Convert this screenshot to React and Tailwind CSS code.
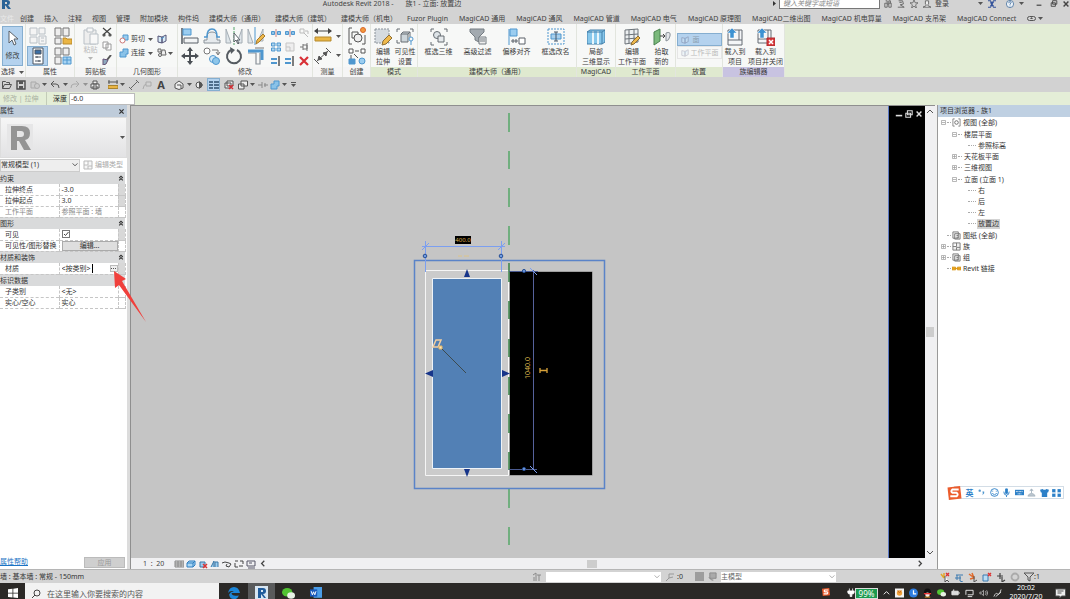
import clsx from 'clsx';

// colours shared by the drawings
const B = '#4f97cf';
const D = '#5b6168';
const L = '#b9c0c6';

// drawings on an 18 x 18 grid
const BIG = {
  cursor: <path d="M5 2v12l3-3 2 5 2-1-2-5h4z" fill="#fff" stroke={D} />,
  family: <g fill="#f4f4f4" stroke={L}><path d="M1 1h7v7H1zM1 10h7v6H1zM10 1h6v6h-6z" /><path d="M10 9h7v8h-7zM12 11h3M12 14h3" /></g>,
  types: <g fill="#eee" stroke="#777"><path d="M1 1h6v8H1zM9 1h6v8H9zM1 11h6v6H1z" /><path d="M9 11h3l1 1h5v5H9z" fill="#eab544" stroke="#b98a2c" /></g>,
  props: <g stroke="#4b5560" fill="#fff"><path d="M4 1h10v16H4z" /><path d="M6 3h6v4H6z" fill="#3a6ea5" /><path d="M6 10h6M6 14h6M8 9v2M10 13v2" /></g>,
  typeGrid: <g fill="#eee" stroke="#777"><path d="M1 1h6v7H1zM9 1h6v7H9zM1 10h6v7H1z" /><path d="M9 10h8v7H9zM13 10v7M9 13h8" fill="#a9d4f2" stroke={B} /></g>,
  paste: <g fill="#eee" stroke={L}><path d="M2 3h12v14H2z" /><path d="M5 1h6v4H5zM8 7h8v10H8z" fill="#f8f8f8" /></g>,
  align: <g fill="#f2f4f5" stroke={D}><path d="M1 1v16" strokeWidth="1.6" /><path d="M2 2h8v6H2z" fill="#9bcdf0" stroke={B} /><path d="M3 11h14v5H3z" /></g>,
  offset: <g fill="none"><path d="M1 16h16v-3h-3v-3q0-5-5-5t-5 5v3H1z" fill="#e6eaed" stroke="#8a9299" /><path d="M1 10h3q0-8 5-8t5 8h3" stroke={B} strokeWidth="1.6" /></g>,
  mirror: <g fill="#dfe6ea" stroke="#a4adb4"><path d="M1 2l5 14H1zM17 2l-5 14h5z" /><path d="M9 0v18" stroke="#57a46b" strokeDasharray="3 1" /><path d="M9 6v9l2-2 2 4 1-1-2-3h3z" fill="#fff" stroke={D} /></g>,
  mirrorDraw: <g fill="#dfe6ea" stroke="#a4adb4"><path d="M1 2l5 14H1zM16 2l-5 12h5z" /><path d="M8 0v18" stroke={B} /><path d="M9 17l1-4 6-6 2 2-6 6z" fill="#efb94c" stroke="#a57a2c" /></g>,
  move: <g fill="#4a4f55"><path d="M9 0l3 4H6zM9 18l3-4H6zM0 9l4-3v6zM18 9l-4-3v6z" /><path d="M8 4h2v4h4v2h-4v4H8v-4H4V8h4z" /></g>,
  copy: <g fill="#fff" stroke="#777"><circle cx="4" cy="4" r="3" /><path d="M9 3h6v4M13 5l2 3 2-3" fill="none" /><circle cx="10" cy="12" r="3.5" fill="#cfe8f8" stroke={B} /><circle cx="13" cy="14" r="3.5" fill="#8ec6ea" stroke={B} /></g>,
  rotate: <g fill="none" stroke="#555b61" strokeWidth="2"><path d="M6 3A7 7 0 1 0 12 3" /><path d="M5 0l5 3-4 4z" fill="#555b61" stroke="none" /></g>,
  trim: <g fill="none"><path d="M1 6h8v11h4V6" stroke="#8a9299" strokeWidth="1.2" /><path d="M1 4h14v9" stroke={B} strokeWidth="3" /><path d="M8 1h9" stroke="#777" /></g>,
  measure: <g><path d="M1 4h16" stroke="#444" /><path d="M0 4l4-3v6zM18 4l-4-3v6z" fill="#444" /><path d="M1 10h16v4H1z" fill="#eab544" stroke="#b58a2e" /></g>,
  dimension: <g stroke="#555" fill="#555"><path d="M3 14L14 4M0 12l5 5M12 1l5 5" /><path d="M4 13l1-4 3 3zM13 5l-4 1 3 3z" /></g>,
  group: <g fill="none" stroke="#555"><path d="M4 1H1v16h3M14 17h3V8" /><path d="M4 5h6v6H4z" /><circle cx="10" cy="11" r="4" fill="#eee" /><circle cx="15" cy="3" r="2.5" fill="#f39a3d" stroke="#d9662a" /></g>,
  assembly: <g fill="#fff" stroke="#555"><path d="M1 2h4v4H1zM13 2h4v4h-4zM7 4h4M3 8v4M6 7l4 4" /><path d="M1 12h6v5H1z" fill={B} stroke={B} /><circle cx="14" cy="14" r="3" fill="#9bcdf0" stroke={B} /></g>,
  editSketch: <g><path d="M1 1h14v14H1z" fill="#d5dbe0" stroke="#8a9299" strokeDasharray="2 1" /><path d="M8 17l1-4 6-6 3 3-6 6z" fill="#efb94c" stroke="#8d6e35" /></g>,
  visibility: <g fill="none" stroke="#666d73"><path d="M4 1H1v3M14 1h3v3M4 15H1v-3" /><path d="M5 6h7v8H5zM5 6l2-2h7l-2 2M14 4v5" fill="#cdd5da" /><circle cx="15" cy="11" r="2" stroke={B} /><path d="M15 13v4" stroke={B} /></g>,
  box3d: <g fill="none" stroke="#666d73"><path d="M4 1H1v3M14 1h3v3M4 17H1v-3M14 17h3v-3" /><circle cx="7" cy="7" r="3.5" fill="#dde3e7" /><path d="M8 8h6v6H8z" fill="#e6eaed" /></g>,
  filter: <g stroke="#757c82"><path d="M1 1h14v3l-5 5v5l-4-2V9L1 4z" fill="#a3aab0" /><path d="M10 9h7v7h-7zM11 11h5M11 13h5" fill="#eee" /></g>,
  shiftAlign: <g fill="#fff" stroke={D}><path d="M1 1v16" stroke={B} /><path d="M2 1h7v7H2z" fill="#9bcdf0" stroke={B} /><path d="M11 10h6v6h-6zM3 13h7M5 11v4M8 11v4" /></g>,
  rename: <g fill="none" stroke={B}><path d="M1 1h16v15H1z" strokeDasharray="2 1" /><path d="M4 6h10v5H4z" fill="#a8cfec" /><path d="M9 4v9M7 4h4M7 13h4" stroke="#456" /></g>,
  section: <g stroke="#427fa9"><path d="M0 4l3-2h15v12l-3 2H0z" fill="#87c7eb" /><path d="M6 3v13M11 3v13" stroke="#e9f6fc" strokeWidth="2" /><path d="M0 4h15v12M15 4l3-2" fill="none" /></g>,
  plane: <g fill="none" stroke="#6c7379"><path d="M2 2l13-1v13L2 16zM6 2v13M11 1v13M2 7l13-1M2 11l13-1" fill="#eceff1" /><path d="M8 17l1-3 6-6 2 2-6 6z" fill="#efb94c" stroke="#8d6e35" /></g>,
  pick: <g><path d="M1 4l6-3v12l-6 4z" fill="#7bb97c" stroke="#4b8350" /><path d="M7 8h5M10 6l2 2-2 2" stroke="#444" fill="none" /><path d="M13 5q5-2 4 3t-4 5z" fill="#e4e7ea" stroke="#8a9299" /></g>,
  load: <g fill="#f4f6f8" stroke="#646b72"><path d="M2 2h14v15H2zM2 12h14M13 2v10" /><path d="M6 0L1 5h3v5h4V5h3z" fill="#3d92d2" stroke="#fff" strokeWidth=".5" /></g>,
  loadClose: <g fill="#f4f6f8" stroke="#646b72"><path d="M1 2h13v13H1zM1 11h13M11 2v9" /><path d="M5 0L0 5h3v5h4V5h3z" fill="#3d92d2" stroke="#fff" strokeWidth=".5" /><path d="M10 10h8v8h-8z" fill="#d6383b" stroke="#b02b2e" /><path d="M12 12l4 4M16 12l-4 4" stroke="#fff" strokeWidth="1.5" /></g>,
};

// drawings on a 10 x 10 grid
const SMALL = {
  open: <path d="M.5 8.5v-7h3l1 1h3v2M.5 8.5l2-4h7l-2 4z" fill="none" stroke="#555" />,
  save: <g><path d="M1 1h8v8H1z" fill="#d5d5d5" stroke="#4c4c4c" strokeWidth="1.4" /><path d="M3 1h4v3H3zM3 6h4v3H3z" fill="#555" /></g>,
  sync: <g fill="#ccc" stroke="#aaa"><path d="M1 2h5v6H1z" /><circle cx="7" cy="6" r="2.5" /></g>,
  undo: <path d="M4 1L1 4l3 3M1 4h5q3 0 3 4" fill="none" stroke="#555" />,
  redo: <path d="M6 1l3 3-3 3M9 4H4Q1 4 1 8" fill="none" stroke="#aaa" />,
  print: <g fill="#eee" stroke="#555"><path d="M3 1h4v3H3zM1 4h8v4H1zM3 6h4v3H3z" /></g>,
  ruler: <g><path d="M0 2h10M1 0v4M9 0v4" stroke="#555" /><path d="M0 5.5h10v3H0z" fill="#eab544" stroke="#a9842f" /></g>,
  line: <path d="M1 9l7-7M0 7l3 3M7 0l3 3" stroke="#666" />,
  tag: <path d="M1 9q1-5 3-5M4 2h5v4H4z" fill="none" stroke="#aaa" />,
  home: <g fill="#eee" stroke="#555"><path d="M1 4l4-3 4 3v4L5 9.5 1 8z" /><path d="M3 5h4v4" /></g>,
  sect: <g><circle cx="5" cy="5" r="3" fill="#eee" stroke="#555" /><path d="M5 1l4 4-4 4z" fill="#555" /></g>,
  thin: <path d="M0 2h4M5 2h5M0 5h4M5 5h5M0 8h4M5 8h5" stroke="#2d4d6d" strokeWidth="1.5" />,
  closeWin: <g fill="#eee" stroke="#555"><path d="M3 1h6v5H3zM1 3h6v5H1z" /><path d="M5 5l4 4M9 5L5 9" stroke="#d62f34" strokeWidth="1.5" /></g>,
  windows: <path d="M3 1h6.500v5H3zM.5 4H6v5H.5z" fill="#eee" stroke="#555" />,
  snap: <path d="M0 5h4M6 5h4M4 2v6M7 3v4" stroke="#888" />,
  join: <path d="M4 1h5v5H7v3H1V4h3z" fill="#8ac2e8" stroke={B} />,
  cut: <g><path d="M4 1h5v5H4z" fill="#9bcdf0" stroke={B} /><circle cx="3.5" cy="6.5" r="2.5" fill="#fff" stroke="#c77" /></g>,
  cube: <g fill="#d9ebf7" stroke="#557"><path d="M1 2l4 1v6L1 8zM5 3l4-2v6L5 9z" /><path d="M4 5l3-2" stroke={B} /></g>,
  paint: <g fill="#eee" stroke="#666"><path d="M1 1h3v3H1zM5 2h3l1 5H4z" /><circle cx="3" cy="7" r="1.5" /></g>,
  scissors: <g fill="none" stroke="#444" strokeWidth="1.2"><path d="M1 1l7 6M9 1L2 7" /><circle cx="2" cy="8" r="1" /><circle cx="8" cy="8" r="1" /></g>,
  copyDoc: <path d="M1 1h5v6H1zM4 3h5v6H4z" fill="#fff" stroke="#999" />,
  brush: <g><path d="M9 0L5 5" stroke="#555" strokeWidth="2" /><path d="M1 4l5 1-2 4-3 1z" fill="#8ea9bf" stroke="#657" /></g>,
  split: <g><path d="M.5 3.500h3v3h-3zM6.500 3.500h3v3h-3z" fill="#8dc4e8" stroke={B} /><path d="M5 1v8" stroke="#b66" strokeWidth=".8" /></g>,
  array: <path d="M.5 1h3.500v3H.5zM6 1h3.500v3H6zM.5 6h3.500v3H.5zM6 6h3.500v3H6z" fill="#add5ef" stroke={B} />,
  unpin: <path d="M1 1h4v4H1zM5 5l4 4M6 3h3v3" fill="none" stroke="#bbb" />,
  pin: <path d="M1 5h3M4 2v6M4 3h4v4H4M8 1v8" fill="none" stroke="#777" />,
  scale: <path d="M1 1h8v8H1zM1 5h4v4" fill="#eee" stroke="#c5c5c5" />,
  extend: <g><path d="M0 3h6M0 7h6" stroke={B} strokeWidth="2" /><path d="M8 0v10" stroke="#555" strokeWidth="1.5" /></g>,
  del: <path d="M1 1l8 8M9 1L1 9" stroke="#d82f35" strokeWidth="2.2" />,
  x: <path d="M2 2l6 6M8 2L2 8" stroke="currentColor" strokeWidth="1.8" />,
  down: <path d="M2 3l3 3 3-3" fill="none" stroke="currentColor" />,
  up: <path d="M2 7l3-3 3 3" fill="none" stroke="currentColor" />,
  collapse: <path d="M2 5l3-3 3 3M2 9l3-3 3 3" fill="none" stroke="currentColor" strokeWidth="1.8" />,
  right: <path d="M3 2l3 3-3 3" fill="none" stroke="currentColor" strokeWidth="1.4" />,
  left: <path d="M7 2L4 5l3 3" fill="none" stroke="currentColor" strokeWidth="1.4" />,
  min: <path d="M1 7h8" stroke="currentColor" strokeWidth="2" />,
  restore: <path d="M3 1h6v5H3zM1 4h6v5H1z" fill="none" stroke="currentColor" strokeWidth="1.3" />,
  search: <g fill="none" stroke="currentColor"><circle cx="6" cy="4" r="3" /><path d="M4 6L1 9" /></g>,
  binoc: <path d="M1 4h3v5H1zM6 4h3v5H6zM2 1h2v3M6 4V1h2v3M4 5h2" fill="none" stroke="#555" />,
  key: <path d="M2 1h5l1 4-4 1 5 3H1M3 3h3" fill="none" stroke="#555" />,
  star: <path d="M5 0l1.5 3.5H10L7 6l1 4-3-2.3L2 10l1-4L0 3.5h3.500z" fill="none" stroke="#555" strokeWidth=".9" />,
  user: <path d="M3 1h4v4L6 6v1l4 2H0l4-2V6L3 5z" fill="#eee" stroke="#555" />,
  exch: <path d="M0 1h3l2 3 2-3h3M0 9h3l2-3 2 3h3M3 3l4 5M7 2L3 8" fill="none" stroke="#34539a" strokeWidth="1.4" />,
  help: <g fill="none" stroke="#446f9c"><circle cx="5" cy="5" r="4.5" fill="#eef4fa" /><path d="M3.500 4q0-2 1.500-2t1.500 1.500L5 5v1M5 7v1" /></g>,
  detail: <path d="M1 2h9v6H1zM1 4h9M1 6h9M4 2v6M7 2v6" fill="#ddd" stroke="#888" />,
  style: <path d="M1 4l2-2h6v4L7 8H1zM1 4h6v4M7 4l2-2" fill="#a9d6f4" stroke="#2f7fc0" />,
  sun: <g><path d="M2 3h5v5H2z" fill="#9bcdf0" stroke="#3a77a5" /><path d="M5 5l4 4M9 5L5 9" stroke="#d33" strokeWidth="1.5" /></g>,
  shadow: <path d="M1 8l3-6v6M5 8V3h3v5" fill="#9bcdf0" stroke="#3a77a5" />,
  glasses: <path d="M0 4l3-1 4 1 2 1-2 3-3-1 1-2" fill="none" stroke="#444" />,
  crop: <path d="M1 2h3M6 2h3v3M1 4v4h3M5 7h4" fill="none" stroke="#444" />,
  reveal: <path d="M1 2h8v5H1zM2 9h7M3 4h3" fill="none" stroke="#556" />,
  view: <g fill="none" stroke="#666"><path d="M3 1H1v8h2M7 1h2v8H7" strokeWidth=".8" /><circle cx="5" cy="5" r="2" /></g>,
  sheet: <path d="M1 1h6v7H1zM3 3h6v6H3zM5 5h2M5 7h2" fill="#eee" stroke="#777" />,
  fam: <path d="M1 1h8v8H1zM1 5h4V1M5 9V6h4" fill="#eee" stroke="#777" />,
  link: <path d="M0 3.500h4v3H0zM6 3.500h4v3H6zM3 5h4" fill="#e8a317" stroke="#d99412" />,
  pickLink: <g><path d="M1 2l3 4M4 1v5" stroke="#e2a92b" strokeWidth="1.5" /><path d="M6 1l3 3M9 1L6 4" stroke="#d33" strokeWidth="1.4" /><path d="M5 4v6l2-2 2 2" fill="#fff" stroke="#555" /></g>,
  pickUnder: <path d="M2 3h7M1 6h6M3 3v5M6 4v5l3 1" fill="none" stroke="#3c7bb0" />,
  pickPin: <g fill="none"><path d="M1 2l4 3M4 1l2 5-4 1" stroke="#e26b2b" strokeWidth="1.5" /><path d="M6 4v6l3-2" stroke="#555" /></g>,
  pickFace: <g><path d="M1 3h5v6H1z" fill="#b9ddf5" stroke="#3c7bb0" /><path d="M6 1l3 3M9 1L6 4" stroke="#d33" strokeWidth="1.4" /></g>,
  drag: <path d="M1 4h6M4 1v6M6 5v5l3-2" fill="none" stroke="#444" strokeWidth="1.2" />,
  ring: <circle cx="5" cy="5" r="3.5" fill="none" stroke="#aaa" strokeWidth="1.8" />,
  funnel: <path d="M0 1h10L6 5v4L4 8V5z" fill="none" stroke="#555" />,
  walker: <path d="M1 3l3-2v8M5 3h4M7 3v6M2 5v4" fill="none" stroke="#8a8a8a" />,
  option: <path d="M1 9l3-3M4 6V2h5M4 6l4-1" fill="none" stroke="#999" />,
  block: <path d="M0 0h10v10H0z" fill="#9d9d9d" />,
  block2: <path d="M2 1h7v6H2zM1 6l3 3h2" fill="#aaa" stroke="#888" />,
  edge: <path d="M0 5Q1 0 5 0t5 5H3q0 3 6 2-1 3-4 3-4 0-4-4 1-2 4-2.500Q1 3 0 5z" fill="#1c86d8" />,
  wechat: <g><ellipse cx="4" cy="4" rx="4" ry="3.3" fill="#51c332" /><ellipse cx="7" cy="6.5" rx="3" ry="2.5" fill="#e8f2e5" /></g>,
  word: <g><path d="M3 0h7v9H3z" fill="#4a9de8" /><path d="M0 2h6v6H0z" fill="#185abd" /><path d="M1 3.500l1 3 1-2.500 1 2.500 1-3" fill="none" stroke="#fff" strokeWidth=".8" /></g>,
  win: <path d="M0 1.300L4.500 .8v4H0zM5.300 .7L10 0v4.800H5.300zM0 5.500h4.500v4L0 9zM5.300 5.500H10V10l-4.700-.6z" fill="#fff" />,
  plug: <path d="M3 0v3M7 0v3M1 3h8v2q0 2-3 2v3H4V7Q1 7 1 5z" fill="#fff" stroke="#fff" />,
  sogou: <g><path d="M0 1l9-1 1 9-9 1z" fill="#ec5c2c" /><path d="M8 2.500H3.500q-1.500 1.200 0 2.300h3q1.500 1.200 0 2.500H2" fill="none" stroke="#fff" strokeWidth="1.4" /></g>,
  note: <g><path d="M0 0h10v10H0z" fill="#f3f3f3" /><circle cx="5" cy="5" r="3" fill="#f0a13a" /><path d="M3 2l2 3 2-3" stroke="#c66b1d" /></g>,
  moon: <g><circle cx="5" cy="5" r="5" fill="#2f7de0" /><path d="M5 2v4h3" stroke="#fff" fill="none" strokeWidth="1.4" /></g>,
  qq: <g><ellipse cx="5" cy="5" rx="4" ry="5" fill="#111" /><ellipse cx="5" cy="7" rx="2.5" ry="2.5" fill="#eee" /><path d="M1 5h8v1.500H1z" fill="#e33" /><path d="M2 9h6v1H2z" fill="#f0a020" /></g>,
  batt: <path d="M1 3h7v4H1zM9 4v2M3 1v2" fill="#ddd" stroke="#eee" />,
  net: <path d="M1 2h8v5H3M1 2v5M3 9h5" fill="none" stroke="#eee" />,
  vol: <path d="M1 4h2l2-2v6L3 6H1zM7 3q2 2 0 4M8.500 2q2.500 3 0 6" fill="none" stroke="#ccc" strokeWidth=".8" />,
  pen: <path d="M1 9q2-5 4-3t4-5M3 9l6-5" fill="none" stroke="#ddd" />,
  msg: <path d="M0 1h10v7H6l-2 2V8H0zM2 3h6M2 5h4" fill="#eee" stroke="#555" />,
  comma: <g fill={B}><circle cx="3" cy="3" r="1.3" /><path d="M6 4h2q1 2-2 4 1-2 0-4z" /></g>,
  smile: <g fill="none" stroke="#2c80c8"><circle cx="5" cy="5" r="4.3" /><path d="M3 3v1M7 3v1M2.500 6Q5 9 7.500 6" /></g>,
  mic: <g stroke="#2c80c8" fill="none"><path d="M4 1h2v5H4z" fill="#2c80c8" /><path d="M2 4q0 4 3 4t3-4M5 8v2" /></g>,
  keyb: <g><path d="M0 2h10v6H0z" fill="#2c80c8" /><path d="M1 4h8M3 6.500h4" stroke="#fff" strokeDasharray="1 .6" /></g>,
  person: <path d="M5 1v5M3 3q2-3 4 0M1 9q1-3 4-3t4 3z" fill="#bcc7d0" stroke="#a5b3bf" />,
  shirt: <path d="M0 2l3-1q2 2 4 0l3 1-1 3H8v5H2V5H1z" fill="#2c80c8" />,
  grid: <path d="M0 1h4v4H0zM6 1h4v4H6zM0 6h4v4H0zM6 6h4v4H6z" fill="#2c80c8" stroke="#fff" strokeWidth=".3" />,
};

function Big({ name }) {
  return <svg viewBox="0 0 18 18" className="block h-[18px] w-[18px] shrink-0" fill="none" aria-hidden="true">{BIG[name]}</svg>;
}

function Ico({ name, className = 'h-[10px] w-[10px]' }) {
  return <svg viewBox="0 0 10 10" className={clsx('block shrink-0', className)} fill="none" aria-hidden="true">{SMALL[name]}</svg>;
}

function Caret({ className }) {
  return (
    <svg viewBox="0 0 5 3" className={clsx('block h-[3px] w-[5px] shrink-0', className)} aria-hidden="true">
      <path d="M0 0h5L2.500 3z" fill="#555" />
    </svg>
  );
}

const CORE_TABS = [
  '创建', '插入', '注释', '视图', '管理', '附加模块', '构件坞', '建模大师（通用）', '建模大师（建筑）', '建模大师（机电）',
  'Fuzor Plugin',
];

const ADDIN_TABS = [
  'MagiCAD 通用', 'MagiCAD 通风', 'MagiCAD 管道', 'MagiCAD 电气', 'MagiCAD 原理图', 'MagiCAD二维出图',
  'MagiCAD 机电算量', 'MagiCAD 支吊架', 'MagiCAD Connect',
];

function TitleBar() {
  return (
    <header className="flex h-3 shrink-0 items-start overflow-hidden leading-[8px] whitespace-nowrap text-[#444]">
      <svg viewBox="0 0 10 9" className="ml-px h-[9px] w-[10px] shrink-0" aria-hidden="true">
        <path d="M1 9V0h5q3 0 3 2.500T7 5l3 4H7L4.500 5.500H4V9zM4 2v2h2V2z" fill="#2a6396" />
      </svg>
      <h1 className="flex flex-1 justify-center gap-3">
        <span>Autodesk Revit 2018 -</span>
        <span>族1 - 立面: 放置边</span>
      </h1>
      <div className="flex w-[297px] shrink-0 items-start">
        <svg viewBox="0 0 3 5" className="mt-px mr-[3px] h-[5px] w-[3px] shrink-0" aria-hidden="true"><path d="M0 0l3 2.500L0 5z" fill="#333" /></svg>
        <input
          aria-label="搜索"
          placeholder="键入关键字或短语"
          className="h-[9px] w-[101px] shrink-0 border-x border-b border-[#777] bg-white px-[3px] pb-px text-[7px] leading-[8px] italic placeholder:text-[#888]"
        />
        <button aria-label="查找" className="ml-[3px]"><Ico name="binoc" className="h-2 w-2.5" /></button>
        <button aria-label="通讯" className="ml-[3px]"><Ico name="key" className="h-2 w-2.5" /></button>
        <button aria-label="收藏" className="ml-[3px]"><Ico name="star" className="h-2 w-2.5" /></button>
        <button className="ml-[3px] flex gap-[3px]"><Ico name="user" className="h-2 w-2.5" />登录</button>
        <Caret className="mt-0.5 ml-auto" />
        <button aria-label="Exchange" className="ml-1"><Ico name="exch" className="h-2 w-2.5" /></button>
        <button aria-label="帮助" className="ml-2"><Ico name="help" className="h-2 w-2.5" /></button>
        <Caret className="mt-0.5 ml-1" />
        <button aria-label="最小化" className="ml-3"><Ico name="min" className="h-2 w-1.5" /></button>
        <button aria-label="还原" className="ml-2"><Ico name="restore" className="h-[7px] w-2" /></button>
        <button aria-label="关闭" className="ml-1"><Ico name="x" className="h-2 w-2" /></button>
      </div>
    </header>
  );
}

function Tabs() {
  return (
    <nav className="flex h-3 shrink-0 items-center gap-[11px] overflow-hidden pt-px whitespace-nowrap text-[#3f3f3f]">
      <div className="flex gap-[10px]">
        <button className="mr-[-4px] text-[#e9e9e9]">文件</button>
        {CORE_TABS.map((t) => <button key={t}>{t}</button>)}
      </div>
      {ADDIN_TABS.map((t) => <button key={t}>{t}</button>)}
      <span className="flex items-center gap-0.5">
        <svg viewBox="0 0 9 5" className="h-[5px] w-[9px]" aria-hidden="true"><rect x=".5" y=".5" width="8" height="4" rx="2" fill="none" stroke="#555" /><path d="M3 3h3L4.500 1z" fill="#555" /></svg>
        <Caret />
      </span>
    </nav>
  );
}

function Panel({ label, width, tone = 'bg-[#f5f5f5]', children }) {
  return (
    <section className={clsx('flex shrink-0 flex-col border-r border-[#e2e5de] bg-[#f7f8f7]', width)}>
      <div className="flex h-[43px] justify-center">{children}</div>
      <h2 className={clsx('flex h-[10px] items-center justify-center gap-1 whitespace-nowrap', tone)}>{label}</h2>
    </section>
  );
}

function BigButton({ icon, lines, width = 'w-[22px]' }) {
  return (
    <button className={clsx('flex shrink-0 flex-col items-center pt-1 leading-[10px] whitespace-nowrap', width)}>
      <span className="flex h-[19px]"><Big name={icon} /></span>
      {lines.map((l) => <span key={l}>{l}</span>)}
    </button>
  );
}

function IconGrid({ names, cols = 'grid-cols-4' }) {
  return (
    <div className={clsx('grid content-start gap-x-1 gap-y-[2px] pt-[3px]', cols)}>
      {names.map((n) => <button key={n} aria-label={n}><Big name={n} /></button>)}
    </div>
  );
}

function GeoRow({ icon, text, extra, caret }) {
  return (
    <div className="flex h-[14px] items-center whitespace-nowrap">
      <button className="flex shrink-0 items-center gap-0.5"><Ico name={icon} />{text}</button>
      <Caret className="ml-[3px]" />
      <button aria-label={extra} className="ml-1"><Ico name={extra} /></button>
      {caret && <Caret className="ml-px" />}
    </div>
  );
}

const GREEN = 'bg-[#dfe9cf]';

function Ribbon() {
  return (
    <div className="flex h-[53px] shrink-0 overflow-hidden bg-[#e3edd6] text-[#3c3c3c]">
      <Panel label={<>选择<Caret /></>} width="w-[26px]">
        <button className="mt-0.5 flex h-[40px] w-[21px] flex-col items-center gap-1 border border-[#85aed0] bg-[#b4d2ee] pt-0.5">
          <Big name="cursor" />修改
        </button>
      </Panel>
      <Panel label="属性" width="w-[49px]">
        <div className="grid grid-cols-2 content-start gap-x-1 pt-0.5">
          <button aria-label="族类别" className="flex h-5 w-[21px] items-center justify-center"><Big name="family" /></button>
          <button aria-label="族类型" className="flex h-5 w-[21px] items-center justify-center"><Big name="types" /></button>
          <button aria-label="属性" className="flex h-5 w-[21px] items-center justify-center border border-[#85aed0] bg-[#b4d2ee]"><Big name="props" /></button>
          <button aria-label="类型属性" className="flex h-5 w-[21px] items-center justify-center"><Big name="typeGrid" /></button>
        </div>
      </Panel>
      <Panel label="剪贴板" width="w-[42px]">
        <button disabled className="flex w-[22px] flex-col items-center pt-[3px] leading-[10px] text-[#bbb]">
          <Big name="paste" />粘贴<Caret className="mt-0.5 opacity-40" />
        </button>
        <div className="flex flex-col gap-1 pt-[3px]">
          <button aria-label="剪切"><Ico name="scissors" /></button>
          <button aria-label="复制"><Ico name="copyDoc" /></button>
          <button aria-label="匹配"><Ico name="brush" /></button>
        </div>
      </Panel>
      <Panel label="几何图形" width="w-[61px]">
        <div className="flex w-[56px] flex-col pt-2">
          <GeoRow icon="cut" text="剪切" extra="cube" />
          <GeoRow icon="join" text="连接" extra="paint" caret />
        </div>
      </Panel>
      <Panel label="修改" width="w-[135px]">
        <IconGrid names={['align', 'offset', 'mirror', 'mirrorDraw', 'move', 'copy', 'rotate', 'trim']} />
        <div className="ml-1.5 grid grid-cols-3 content-start gap-1 pt-1">
          {['split', 'split', 'unpin', 'array', 'scale', 'pin', 'extend', 'extend', 'del'].map((n, i) => (
            <button key={i} aria-label={n}><Ico name={n} /></button>
          ))}
        </div>
      </Panel>
      <Panel label="测量" width="w-[30px]">
        <IconGrid names={['measure', 'dimension']} cols="grid-cols-1" />
        <div className="ml-1 flex flex-col gap-4 pt-[11px]"><Caret /><Caret /></div>
      </Panel>
      <Panel label="创建" width="w-[28px]">
        <IconGrid names={['group', 'assembly']} cols="grid-cols-1" />
      </Panel>
      <Panel label="模式" width="w-[47px]" tone={GREEN}>
        <BigButton icon="editSketch" lines={['编辑', '拉伸']} />
        <BigButton icon="visibility" lines={['可见性', '设置']} />
      </Panel>
      <Panel label="建模大师（通用）" width="w-[159px]" tone={GREEN}>
        <BigButton icon="box3d" lines={['框选三维']} width="w-[39px]" />
        <BigButton icon="filter" lines={['高级过滤']} width="w-[39px]" />
        <BigButton icon="shiftAlign" lines={['偏移对齐']} width="w-[39px]" />
        <BigButton icon="rename" lines={['框选改名']} width="w-[39px]" />
      </Panel>
      <Panel label="MagiCAD" width="w-[39px]" tone={GREEN}>
        <BigButton icon="section" lines={['局部', '三维显示']} width="w-[38px]" />
      </Panel>
      <Panel label="工作平面" width="w-[60px]" tone={GREEN}>
        <BigButton icon="plane" lines={['编辑', '工作平面']} width="w-[32px]" />
        <BigButton icon="pick" lines={['拾取', '新的']} width="w-[27px]" />
      </Panel>
      <Panel label="放置" width="w-[47px]" tone={GREEN}>
        <div className="w-[45px] pt-[9px]">
          <button className="flex h-[13px] w-full items-center gap-1 border border-[#85aed0] bg-[#b4d2ee] px-[3px] text-[#8b9eb0]">
            <Ico name="cube" className="h-2 w-2 opacity-40" />面
          </button>
          <button className="flex h-[13px] w-full items-center gap-0.5 border border-[#e5e5e5] px-[3px] whitespace-nowrap text-[#bbb]">
            <Ico name="cube" className="h-2 w-2 opacity-30" />工作平面
          </button>
        </div>
      </Panel>
      <Panel label="族编辑器" width="w-[62px]" tone="bg-[#c8c3e1]">
        <BigButton icon="load" lines={['载入到', '项目']} width="w-[24px]" />
        <BigButton icon="loadClose" lines={['载入到', '项目并关闭']} width="w-[37px]" />
      </Panel>
    </div>
  );
}

function QuickAccess() {
  return (
    <div className="flex h-[15px] shrink-0 items-center bg-[#d2d2d2] pl-0.5">
      <button aria-label="打开"><Ico name="open" /></button>
      <button aria-label="保存" className="ml-1"><Ico name="save" /></button>
      <button aria-label="同步" className="ml-1"><Ico name="sync" /></button>
      <Caret className="ml-0.5" />
      <button aria-label="放弃" className="ml-[3px]"><Ico name="undo" /></button>
      <Caret className="ml-[3px]" />
      <button aria-label="重做" className="ml-0.5"><Ico name="redo" /></button>
      <Caret className="ml-[3px] opacity-50" />
      <button aria-label="打印" className="ml-0.5"><Ico name="print" /></button>
      <button aria-label="测量" className="ml-2"><Ico name="ruler" /></button>
      <Caret className="ml-0.5" />
      <button aria-label="对齐标注" className="ml-1"><Ico name="line" /></button>
      <button aria-label="标记" className="ml-[3px]"><Ico name="tag" /></button>
      <button className="ml-1 w-[10px] text-center text-[11px] leading-none font-bold text-[#444]">A</button>
      <button aria-label="三维视图" className="ml-2"><Ico name="home" /></button>
      <Caret className="ml-[3px]" />
      <button aria-label="剖面" className="ml-0.5"><Ico name="sect" /></button>
      <button aria-label="细线" className="ml-[3px] flex h-[13px] w-[13px] items-center justify-center border border-[#85aed0] bg-[#b4d2ee]"><Ico name="thin" /></button>
      <button aria-label="关闭隐藏窗口" className="ml-1"><Ico name="closeWin" /></button>
      <button aria-label="切换窗口" className="ml-1"><Ico name="windows" /></button>
      <Caret className="ml-0.5" />
      <button aria-label="捕捉" className="ml-[3px]"><Ico name="snap" /></button>
      <button aria-label="连接" className="ml-0.5"><Ico name="join" /></button>
      <Caret className="ml-0.5" />
      <button aria-label="自定义" className="ml-1 border-t border-[#555] pt-px"><Caret /></button>
    </div>
  );
}

function OptionsBar() {
  return (
    <div className="flex h-[13px] shrink-0 items-center bg-[#e4eed7]">
      <span className="flex h-full w-[47px] items-center border-r border-[#c3ccb8] pl-[3px] text-[#a9b0a2]">修改 | 拉伸</span>
      <label htmlFor="depth" className="ml-1.5 text-[#222]">深度</label>
      <input id="depth" defaultValue="-6.0" className="ml-0.5 h-[12px] w-[66px] border border-[#bbb] bg-white px-px text-[7px] text-[#333]" />
    </div>
  );
}

const PROPS = [
  { group: '约束', fold: true },
  { name: '拉伸终点', value: '-3.0', btn: true },
  { name: '拉伸起点', value: '3.0', btn: true },
  { name: '工作平面', value: '参照平面 : 墙', dim: true },
  { group: '图形', fold: true },
  { name: '可见', kind: 'check', btn: true },
  { name: '可见性/图形替换', kind: 'edit' },
  { group: '材质和装饰', fold: true },
  { name: '材质', value: '<按类别>', kind: 'material', btn: true },
  { group: '标识数据' },
  { name: '子类别', value: '<无>' },
  { name: '实心/空心', value: '实心' },
];

function PropValue({ row }) {
  if (row.kind === 'check') {
    return (
      <span className="grid h-2 w-2">
        <input type="checkbox" defaultChecked aria-label={row.name} className="col-start-1 row-start-1 h-2 w-2 appearance-none border border-[#777] bg-white" />
        <svg viewBox="0 0 8 8" className="pointer-events-none col-start-1 row-start-1 h-2 w-2" aria-hidden="true"><path d="M2 4l1.500 1.500L6.500 2" fill="none" stroke="#444" /></svg>
      </span>
    );
  }
  if (row.kind === 'edit') {
    return <button className="block h-[10px] w-full border border-[#aaa] bg-[#dedede] leading-[8px]">编辑...</button>;
  }
  if (row.kind === 'material') {
    return (
      <div className="flex items-center justify-between">
        <input aria-label={row.name} defaultValue={row.value} className="h-[9px] w-[31px] border-r border-black text-[7px]" />
        <button aria-label="浏览" className="flex h-[7px] w-2 items-center justify-center border border-[#bbb] bg-[#eee]">
          <svg viewBox="0 0 5 1" className="h-px w-[5px]" aria-hidden="true"><path d="M0 0h1v1H0zM2 0h1v1H2zM4 0h1v1H4z" fill="#555" /></svg>
        </button>
      </div>
    );
  }
  return row.value;
}

function Properties() {
  return (
    <aside className="flex w-[127px] shrink-0 flex-col overflow-hidden bg-white text-[#333]">
      <div className="flex h-3 shrink-0 items-center justify-between bg-[#bfccda] pr-0.5">
        <h2>属性</h2>
        <button aria-label="关闭属性" className="text-[#333]"><Ico name="x" className="h-[7px] w-[7px]" /></button>
      </div>
      <div className="flex h-[41px] shrink-0 items-center justify-between border border-[#ddd] bg-linear-to-b from-[#f6f6f6] to-[#e2e2e4] pr-px pl-1.5">
        <svg viewBox="0 0 26 28" className="h-7 w-[26px]" aria-hidden="true">
          <path d="M0 0h26v28H0z" fill="#e6e6e7" />
          <path d="M4 26V2h11q8 0 8 7 0 6-5 7l6 10h-7l-5-9h-2v9zM10 7v6h4q3 0 3-3t-3-3z" fill="#949494" />
        </svg>
        <Caret />
      </div>
      <div className="flex h-[14px] shrink-0 items-center">
        <div className="flex h-[13px] w-[80px] items-center border border-[#ccc] bg-[#eee]">
          <select aria-label="类型" className="h-full flex-1 appearance-none text-[7px]"><option>常规模型 (1)</option></select>
          <Ico name="down" className="h-2 w-2" />
        </div>
        <button disabled className="ml-[3px] flex items-center gap-0.5 text-[#aaa]"><Ico name="fam" className="h-[10px] w-[10px] opacity-50" />编辑类型</button>
      </div>
      <table className="w-[125px] table-fixed border-collapse leading-[9px] whitespace-nowrap">
        <colgroup><col className="w-[59px]" /><col className="w-[59px]" /><col className="w-[7px]" /></colgroup>
        <tbody>
          {PROPS.map((row) => row.group ? (
            <tr key={row.group} className="h-3 bg-[#d9dadb]">
              <th colSpan={2} className="p-0 text-left font-normal">{row.group}</th>
              <td className="p-0">{row.fold && <Ico name="collapse" className="h-[6px] w-[6px]" />}</td>
            </tr>
          ) : (
            <tr key={row.name} className={clsx('h-[11px] border-b border-dashed border-[#c6c6c6]', row.dim && 'text-[#888]')}>
              <th className="border-r border-dashed border-[#c6c6c6] p-0 pl-[5px] text-left font-normal">{row.name}</th>
              <td className="border-r border-dashed border-[#c6c6c6] p-0 pl-0.5"><PropValue row={row} /></td>
              <td className={clsx('border-r border-dashed border-[#c6c6c6] p-0', row.btn && 'bg-[#d8d8d8]')} />
            </tr>
          ))}
        </tbody>
      </table>
      <div className="mt-auto flex h-[14px] shrink-0 items-center justify-between pr-0.5">
        <a href="#help" className="text-[#1b73c4] underline">属性帮助</a>
        <button disabled className="h-[11px] w-[41px] border border-[#bbb] bg-[#cfcfcf] leading-[9px] text-[#999]">应用</button>
      </div>
    </aside>
  );
}

function Drawing() {
  return (
    <svg viewBox="131 106 758 452" className="block h-[452px] w-[758px] shrink-0" aria-label="立面: 放置边">
      <path d="M509 113v19M509 151v18M509 188v19M509 226v19M509 489v19M509 527v18" stroke="#55a868" strokeWidth="1.5" />
      <path d="M414.500 260.500h190v228h-190z" fill="none" stroke="#5a83c8" strokeWidth="1.5" />
      <path d="M509 271.500h83.500v204H509z" fill="#000" stroke="#ddd" strokeWidth=".5" />
      <path d="M425.500 270.500h83v205h-83z" fill="#cbcbcb" stroke="#f5f5f5" />
      <path d="M432.500 278.500h69v190h-69z" fill="#5280b5" stroke="#eef3f8" />
      <path d="M509 263v212" stroke="#fff" />
      <path d="M509 263v19M509 301v18M509 339v18M509 377v18M509 414v19M509 452v18" stroke="#2f7a3e" strokeWidth="1.5" />
      <g stroke="#7c9ff0" fill="none">
        <path d="M422 246.500h83M425.500 241v31M501.500 241v31M422 250l7-7M498 250l7-7" />
        <path d="M533.500 270v200" stroke="#56629c" />
        <path d="M509 271.500h29M509 469.500h28" stroke="#4a5a90" />
        <path d="M530 268l7 7M530 466l7 7" />
      </g>
      <g fill="#6f9be0" stroke="#284f94"><circle cx="425" cy="256" r="1.8" /><circle cx="501" cy="256" r="1.8" /><circle cx="524" cy="271" r="1.6" /><circle cx="524" cy="469" r="1.6" /></g>
      <path d="M464 277l3-8 3 8zM464 469l3 8 3-8zM433 370l-8 3.500 8 3.500zM502 370l8 3.500-8 3.500z" fill="#17358a" />
      <path d="M442 349l24 24" stroke="#3c4a4e" />
      <path d="M433 347l3-7h5l-3 7z" fill="none" stroke="#f3cda0" strokeWidth="1.5" />
      <path d="M439 346h3v3h-3z" fill="#ffe9b8" stroke="#e2b464" />
      <path d="M455 236h16v8h-16z" fill="#000" />
      <text x="463" y="242" textAnchor="middle" fontSize="6" fill="#d9ab4a">400.0</text>
      <path d="M458 256h4M464 256h5" stroke="#dcc48a" />
      <text transform="translate(530 379) rotate(-90)" fontSize="7" fill="#d8b44c">1040.0</text>
      <path d="M540 368v5M547 368v5M540 370.500h7" stroke="#d8a23a" strokeWidth="1.3" />
    </svg>
  );
}

function Canvas() {
  return (
    <main className="flex min-w-0 flex-1 flex-col border-t border-l border-[#8f8f8f] bg-[#c5c5c5]">
      <div className="flex min-h-0 flex-1">
        <div className="flex min-w-0 flex-1 justify-center overflow-hidden"><Drawing /></div>
        <div className="flex w-[37px] shrink-0 items-start justify-end gap-0.5 border-l border-[#5b78c4] bg-black pt-1 pr-0.5 text-[#ddd]">
          <button aria-label="最小化视图"><Ico name="min" className="h-2 w-2" /></button>
          <button aria-label="还原视图"><Ico name="restore" className="h-2 w-2" /></button>
          <button aria-label="关闭视图"><Ico name="x" className="h-2 w-2" /></button>
        </div>
        <div className="flex w-[10px] shrink-0 flex-col items-center justify-between bg-[#f0f0f2] text-[#555]">
          <Ico name="up" />
          <div className="h-[10px] w-2 bg-[#cdcdcd]" />
          <Ico name="down" />
        </div>
      </div>
      <div className="flex h-[11px] shrink-0 items-center gap-0.5 bg-[#f0f0f2] pl-3 text-[#444]">
        <span className="mr-2 whitespace-pre">1  :  20</span>
        {['detail', 'style', 'sun', 'shadow', 'glasses', 'crop', 'reveal'].map((n) => (
          <button key={n} aria-label={n}><Ico name={n} /></button>
        ))}
        <Ico name="left" className="h-[9px] w-[9px]" />
        <div className="flex flex-1 justify-center"><div className="h-2 w-[10px] bg-[#cdcdcd]" /></div>
        <Ico name="right" className="mr-[10px] h-[9px] w-[9px]" />
      </div>
    </main>
  );
}

const TREE = [
  { label: '视图 (全部)', level: 0, icon: 'view', sign: '-' },
  { label: '楼层平面', level: 1, sign: '-', gap: true },
  { label: '参照标高', level: 2 },
  { label: '天花板平面', level: 1, sign: '+' },
  { label: '三维视图', level: 1, sign: '+' },
  { label: '立面 (立面 1)', level: 1, sign: '-', gap: true },
  { label: '右', level: 2 },
  { label: '后', level: 2 },
  { label: '左', level: 2 },
  { label: '放置边', level: 2, active: true },
  { label: '图纸 (全部)', level: 0, icon: 'sheet', gap: true },
  { label: '族', level: 0, icon: 'fam', sign: '+' },
  { label: '组', level: 0, icon: 'sheet', sign: '+' },
  { label: 'Revit 链接', level: 0, icon: 'link' },
];

const INDENT = ['pl-0', 'pl-[11px]', 'pl-[22px]'];

function Sign({ sign }) {
  return (
    <svg viewBox="0 0 5 5" className="block h-[5px] w-[5px] shrink-0" aria-hidden="true">
      {sign && <path d={sign === '+' ? 'M.5.5h4v4h-4zM1 2.500h3M2.500 1v3' : 'M.5.5h4v4h-4zM1 2.500h3'} fill="#fff" stroke="#999" strokeWidth=".7" />}
    </svg>
  );
}

function SogouBar() {
  return (
    <div className="absolute right-1.5 bottom-[70px] flex h-[13px] w-[110px] items-center justify-between border border-[#d3dde6] bg-white pr-0.5 text-[#2c80c8]">
      <Ico name="sogou" className="-ml-2 h-[14px] w-[15px]" />
      <button className="text-[8px] font-bold">英</button>
      {['comma', 'smile', 'mic', 'keyb', 'person', 'shirt', 'grid'].map((n) => (
        <button key={n} aria-label={n}><Ico name={n} className="h-[9px] w-[9px]" /></button>
      ))}
    </div>
  );
}

function Browser() {
  return (
    <aside className="relative w-[132px] shrink-0 bg-white text-[#333]">
      <h2 className="flex h-3 items-center bg-[#bfd0e2] pl-0.5">项目浏览器 - 族1</h2>
      <ul className="pl-[3px]">
        {TREE.map((n) => (
          <li key={n.label} className={clsx('flex h-[11px] items-center', INDENT[n.level], n.gap && 'mt-px')}>
            <Sign sign={n.sign} />
            <span className={clsx('h-px border-t border-dotted border-[#aaa]', n.level === 2 ? 'mr-px w-[8px]' : 'mx-px w-1')} />
            {n.icon && <Ico name={n.icon} className="mr-px h-[9px] w-[9px]" />}
            <span className={clsx('px-px', n.active && 'bg-[#d3d3d3]')}>{n.label}</span>
          </li>
        ))}
      </ul>
      <SogouBar />
    </aside>
  );
}

function StatusBar() {
  return (
    <div className="flex h-[14px] shrink-0 items-center border-t border-[#b5b5b5] bg-[#d3d3d3] text-[#333]">
      <span className="flex-1">墙 : 基本墙 : 常规 - 150mm</span>
      <div className="flex w-[538px] items-center">
        <Ico name="walker" className="mr-1 h-[10px] w-[10px]" />
        <div className="flex h-[10px] w-[115px] items-center bg-white">
          <select aria-label="工作集" className="h-full flex-1 appearance-none text-[7px]"><option> </option></select>
          <Ico name="down" className="h-2 w-2 text-[#999]" />
        </div>
        <Ico name="option" className="ml-1 h-[10px] w-[10px]" />
        <span className="ml-0.5">:0</span>
        <Ico name="block" className="ml-3 h-[9px] w-[9px]" />
        <Ico name="block2" className="mx-1 h-[9px] w-[9px]" />
        <div className="flex h-[10px] w-[115px] items-center bg-white">
          <select aria-label="设计选项" className="h-full flex-1 appearance-none text-[7px] text-[#666]"><option>主模型</option></select>
          <Ico name="down" className="h-2 w-2 text-[#999]" />
        </div>
        <div className="mr-[30px] ml-auto flex items-center gap-1">
          {['pickLink', 'pickUnder', 'pickPin', 'pickFace', 'drag', 'ring'].map((n) => (
            <button key={n} aria-label={n}><Ico name={n} /></button>
          ))}
          <button className="flex items-center"><Ico name="funnel" />:1</button>
        </div>
      </div>
    </div>
  );
}

function Taskbar() {
  return (
    <footer className="flex h-4 shrink-0 overflow-hidden bg-[#2b2927] text-white">
      <button aria-label="开始" className="flex w-[25px] justify-center pt-[5px]"><Ico name="win" /></button>
      <label className="flex w-[194px] items-start bg-[#f2f2f2] pt-1.5 pl-1.5 text-[#444]">
        <Ico name="search" />
        <input placeholder="在这里输入你要搜索的内容" aria-label="搜索" className="ml-1.5 h-[10px] w-[160px] text-[8px] leading-[10px] placeholder:text-[#555]" />
      </label>
      <button aria-label="Edge" className="flex w-[29px] justify-center pt-1"><Ico name="edge" className="h-3 w-3" /></button>
      <button aria-label="Revit" className="flex w-[27px] justify-center bg-[#595a5b] pt-[3px]">
        <svg viewBox="0 0 13 13" className="h-[13px] w-[13px]" aria-hidden="true"><path d="M0 0h13v13H0z" fill="#d8e6f2" /><path d="M3 12V2h5q3 0 3 3T8 8l3 4H9L6 8v4zM6 4v2h2V4z" fill="#1f5b9b" /></svg>
      </button>
      <button aria-label="微信" className="flex w-[27px] justify-center pt-1"><Ico name="wechat" className="h-[13px] w-[13px]" /></button>
      <button aria-label="Word" className="flex w-[27px] justify-center pt-1"><Ico name="word" className="h-[12px] w-[12px]" /></button>
      <div className="ml-auto flex w-[250px] items-start pt-[5px]">
        <Ico name="sogou" className="mr-[17px] ml-0.5 h-2 w-2" />
        <Ico name="plug" className="h-[9px] w-2" />
        <span className="h-[11px] w-[23px] border border-[#ddd] bg-[#1c9a4f] text-center text-[8px] leading-[9px]">99%</span>
        <Ico name="up" className="mx-1 h-[9px] w-[9px]" />
        <div className="flex gap-[5px]">
          {['note', 'moon', 'qq', 'wechat', 'batt', 'net', 'vol', 'pen'].map((n) => (
            <Ico key={n} name={n} className="h-[10px] w-[9px]" />
          ))}
        </div>
        <div className="-mt-[5px] ml-1.5 w-[36px] text-center text-[7px] leading-[9px] whitespace-nowrap"><div>20:02</div><div>2020/7/20</div></div>
        <Ico name="msg" className="mr-1 ml-auto h-[10px] w-[11px]" />
      </div>
    </footer>
  );
}

export default function App() {
  return (
    <div className="relative flex h-screen flex-col overflow-hidden bg-[#d3d3d3] font-['Noto_Sans','Noto_Sans_CJK_SC',sans-serif] text-[7px] leading-[10px]">
      <TitleBar />
      <Tabs />
      <Ribbon />
      <QuickAccess />
      <OptionsBar />
      <div className="flex min-h-0 flex-1">
        <Properties />
        <div className="w-[3px] shrink-0 bg-[#dcdcdc]" />
        <Canvas />
        <div className="w-[3px] shrink-0 border-r border-[#999] bg-[#f0f0f0]" />
        <Browser />
      </div>
      <StatusBar />
      <Taskbar />
      {/* pointer to the material browse button */}
      <svg viewBox="0 0 34 52" className="pointer-events-none absolute top-[271px] left-[113px] h-[52px] w-[34px]" aria-hidden="true">
        <path d="M1 0l12 8-4 2 24 41L6 14l-4 3z" fill="#f0403c" />
      </svg>
    </div>
  );
}
